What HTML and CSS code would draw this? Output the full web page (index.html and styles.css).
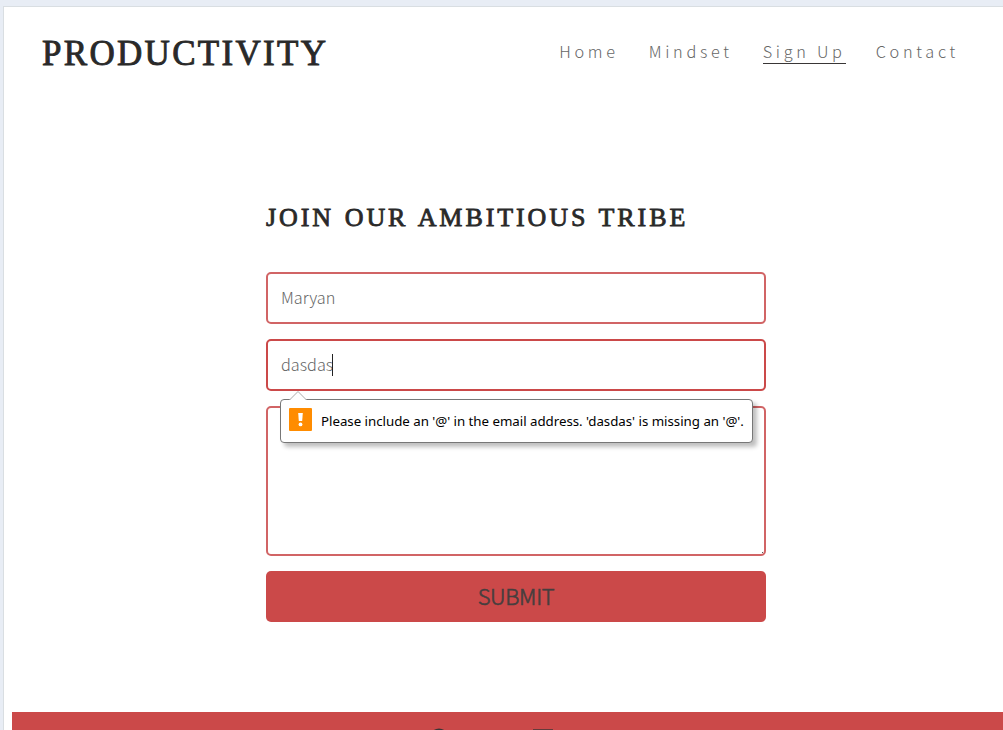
FILE: index.html
```
<!DOCTYPE html>
<html lang="en">
<head>
<meta charset="utf-8">
<title>Productivity</title>
<link rel="stylesheet" href="styles.css">
</head>
<body>
<div class="page">
  <header class="header">
    <h1 class="logo"><span>PRODUCTIVITY</span></h1>
    <nav class="nav">
      <a class="home">Home</a>
      <a class="mindset">Mindset</a>
      <a class="active">Sign Up</a>
      <a class="contact">Contact</a>
    </nav>
  </header>
  <main class="signup">
    <h2 class="title"><span>JOIN OUR AMBITIOUS TRIBE</span></h2>
    <form class="form">
      <div class="field"><span class="name">Maryan</span></div>
      <div class="field focused">
        <span class="email">dasdas</span><i class="caret"></i>
        <div class="tooltip">
          <svg class="arrow" width="18" height="10" viewBox="0 0 18 10"><path d="M0.5 9L9 0.5L17.5 9V10H0.5Z" fill="#fff"/><path d="M0.5 9L9 0.5L17.5 9" fill="none" stroke="#aaa"/></svg>
          <svg class="warning" width="23" height="23" viewBox="0 0 23 23"><rect width="23" height="23" rx="1" fill="#ff8c00"/><path d="M9.2 5H13.8L13.2 13H9.8Z" fill="#fff"/><circle cx="11.5" cy="16.4" r="1.9" fill="#fff"/></svg>
          <span class="message">Please include an '@' in the email address. 'dasdas' is missing an '@'.</span>
        </div>
      </div>
      <div class="field message-box"><i class="grip"></i></div>
      <button class="submit" type="button"><span>SUBMIT</span></button>
    </form>
  </main>
  <footer class="footer">
    <svg width="20" height="20" viewBox="0 0 20 20"><circle cx="10" cy="10" r="9.5" fill="#393636"/></svg>
    <svg width="20" height="20" viewBox="0 0 20 20"><path d="M0 1H20V20H0Z" fill="#643b3b"/></svg>
  </footer>
</div>
</body>
</html>
```
FILE: styles.css
```
* { box-sizing: border-box; }
body {
  margin: 0;
  padding: 6px 0 0 3px;
  height: 730px;
  overflow: hidden;
  background: #e8edf5;
  font-family: "Noto Sans CJK SC", "Open Sans", sans-serif;
  font-weight: 300;
}
.page {
  height: 724px;
  display: flex;
  flex-direction: column;
  background: #fff;
  border: solid #d9dee2;
  border-width: 1px 0 0 1px;
}
.header {
  height: 93px;
  padding: 0 44px 2px 38px;
  display: flex;
  justify-content: space-between;
  align-items: center;
}
.logo, .title {
  margin: 0;
  font-family: "Liberation Serif", serif;
  font-weight: 400;
  color: #292929;
  white-space: nowrap;
}
.logo { padding-top: 2px; font-size: 35px; letter-spacing: 2.3px; -webkit-text-stroke: 0.9px #292929; }
.nav { display: flex; gap: 30px; font-size: 16.3px; line-height: 20px; letter-spacing: 3.7px; color: #666; }
.nav a { height: 23px; white-space: nowrap; }
.nav .active { border-bottom: 1px solid #393636; }
.signup { width: 500px; margin-left: 262px; padding-top: 94px; height: 612px; }
.title { height: 78px; line-height: 48px; font-size: 26px; letter-spacing: 2.9px; word-spacing: 1.4px; -webkit-text-stroke: 0.8px #292929; }
.form { display: flex; flex-direction: column; gap: 15px; }
.field {
  position: relative;
  height: 52px;
  padding: 0 13px;
  display: flex;
  align-items: center;
  border: 2px solid #d16465;
  border-radius: 5px;
  font-size: 16.3px;
  color: #666;
}
.name, .email { padding-bottom: 3px; }
.focused { border-color: #cb4949; z-index: 1; }
.caret { width: 1px; height: 22px; margin-left: -1px; background: #222; }
.message-box { height: 150px; }
.grip { position: absolute; right: 1px; bottom: 1px; width: 1px; height: 1px; background: #555; }
.tooltip {
  position: absolute;
  left: 12px;
  top: 58px;
  width: 473px;
  height: 44px;
  padding: 0 8px;
  display: flex;
  align-items: center;
  gap: 9px;
  background: #fff;
  border: 1px solid #777;
  border-radius: 4px;
  box-shadow: 4px 4px 4px rgba(0,0,0,.25);
  font: 13.3px/20px "Noto Sans", sans-serif;
  color: #000;
}
.arrow { position: absolute; left: 8px; top: -9px; }
.warning { margin-top: -3px; flex: none; }
.message { white-space: nowrap; letter-spacing: -.025px; }
.submit {
  height: 51px;
  padding: 0 0 2px;
  border: 0;
  border-radius: 5px;
  background: #cb4949;
  font: 300 22px/49px "Noto Sans CJK SC", sans-serif;
  letter-spacing: -.3px;
  -webkit-text-stroke: .6px #453e3e;
  color: #453e3e;
}
.footer {
  flex: none;
  height: 18px;
  margin-left: 8px;
  padding: 16px 0 0 417px;
  display: flex;
  gap: 84px;
  background: #cb4949;
  overflow: hidden;
}
.footer svg { flex: none; }
```
